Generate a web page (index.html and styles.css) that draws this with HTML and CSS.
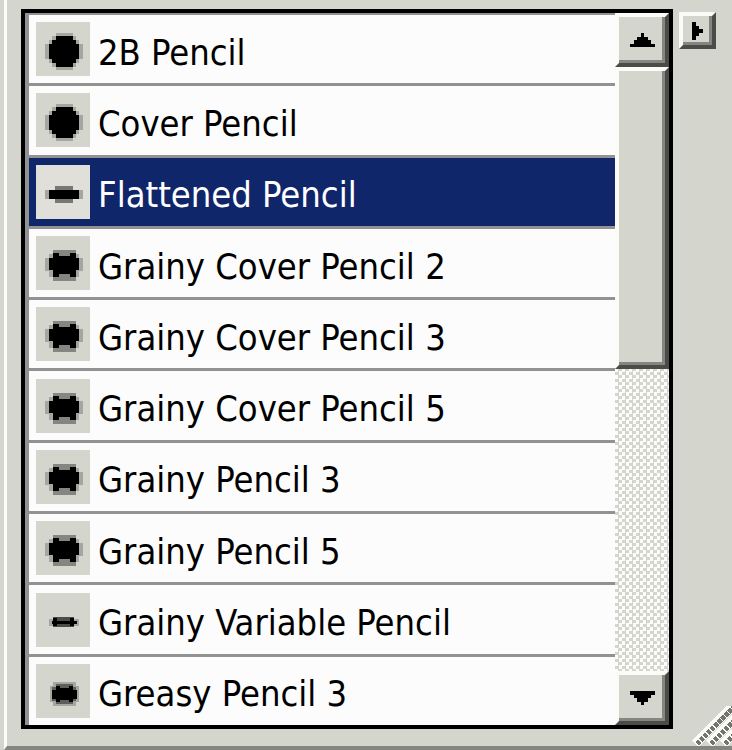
FILE: index.html
```
<!DOCTYPE html>
<html lang="en">
<head>
  <meta charset="UTF-8">
  <title>Pencil Variants</title>
  <link rel="stylesheet" href="styles.css">
</head>
<body>

  <svg class="sprites" aria-hidden="true">
    <symbol id="brush-round" viewBox="0 0 54 54">
      <path fill="#a5a6a0" d="M20 11h17v3h3v4h3v4h4v15h-4v4h-3v4h-3v3H20v-3h-4v-4h-3v-4H9V22h4v-4h3v-4h4z"/>
      <path d="M20 14h17v4h3v4h3v15h-3v4h-3v4H20v-4h-4v-4h-3V22h3v-4h4z"/>
    </symbol>
    <symbol id="brush-flat" viewBox="0 0 54 54">
      <path fill="#a5a6a0" d="M9 25h38v9H9z"/>
      <path fill="#777873" d="M19 21h18v4h3v9h-3v4H19v-4h-3v-9h3z"/>
      <path d="M13 25h30v9H13z"/>
    </symbol>
    <symbol id="brush-grainy" viewBox="0 0 54 54">
      <path fill="#a5a6a0" d="M13 18h30v4h4v13h-4v6H13v-6H9V22h4z"/>
      <path fill="#858681" d="M17 14h23v31H17z"/>
      <path d="M17 17h6v3h11v-3h6v5h3v12h-3v7h-6v-3H23v3h-6v-7h-4V22h4z"/>
    </symbol>
    <symbol id="brush-thin" viewBox="0 0 54 54">
      <path fill="#a5a6a0" d="M13 26h30v7H13z"/>
      <path fill="#4b4b47" d="M17 24h21v10H17z"/>
      <path d="M16 28h25v3H16zM17 25h4v8h-4zM34 25h4v8h-4z"/>
    </symbol>
    <symbol id="brush-small" viewBox="0 0 54 54">
      <path fill="#a5a6a0" d="M17 18h23v4h3v16h-3v4H17v-4h-3V22h3z"/>
      <path fill="#5e5f5b" d="M20 20h17v3h3v14h-3v3H20v-3h-4V23h4z"/>
      <path d="M20 22h4v2h9v-2h4v4h4v9h-4v3h-4v-2h-9v2h-4v-3h-4v-9h4z"/>
    </symbol>
  </svg>

  <div class="palette">
    <div class="list-box">
      <ul class="variants">
        <li><button class="variant"><svg class="brush"><use href="#brush-round"/></svg><span>2B Pencil</span></button></li>
        <li><button class="variant"><svg class="brush"><use href="#brush-round"/></svg><span>Cover Pencil</span></button></li>
        <li><button class="variant selected"><svg class="brush"><use href="#brush-flat"/></svg><span>Flattened Pencil</span></button></li>
        <li><button class="variant"><svg class="brush"><use href="#brush-grainy"/></svg><span>Grainy Cover Pencil 2</span></button></li>
        <li><button class="variant"><svg class="brush"><use href="#brush-grainy"/></svg><span>Grainy Cover Pencil 3</span></button></li>
        <li><button class="variant"><svg class="brush"><use href="#brush-grainy"/></svg><span>Grainy Cover Pencil 5</span></button></li>
        <li><button class="variant"><svg class="brush"><use href="#brush-grainy"/></svg><span>Grainy Pencil 3</span></button></li>
        <li><button class="variant"><svg class="brush"><use href="#brush-grainy"/></svg><span>Grainy Pencil 5</span></button></li>
        <li><button class="variant"><svg class="brush"><use href="#brush-thin"/></svg><span>Grainy Variable Pencil</span></button></li>
        <li><button class="variant"><svg class="brush"><use href="#brush-small"/></svg><span>Greasy Pencil 3</span></button></li>
      </ul>
      <div class="scrollbar">
        <button class="scroll-button" aria-label="Scroll up">
          <svg class="arrow" viewBox="0 0 7 4"><path d="M3 0h1v1h1v1h1v1h1v1H0V3h1V2h1V1h1z"/></svg>
        </button>
        <div class="track"><div class="thumb"></div></div>
        <button class="scroll-button" aria-label="Scroll down">
          <svg class="arrow" viewBox="0 0 7 4"><path d="M0 0h7v1H6v1H5v1H4v1H3V3H2V2H1V1H0z"/></svg>
        </button>
      </div>
    </div>
    <button class="menu-button" aria-label="Palette menu">
      <svg class="menu-arrow" viewBox="0 0 3 5"><path d="M0 0h1v1h1v1h1v1H2v1H1v1H0z"/></svg>
    </button>
    <svg class="grip" viewBox="0 0 40 40" aria-hidden="true">
      <path stroke="#fbfbf8" stroke-width="9" d="M3 38L43 -2M17 38L43 12M31 38L43 26"/>
      <path stroke="#74756f" stroke-width="5" stroke-dasharray="4 1" d="M5 38L45 -2M19 38L45 12M33 38L45 26"/>
    </svg>
  </div>

</body>
</html>
```
FILE: styles.css
```
* {
  box-sizing: border-box;
}

body {
  margin: 0;
  background: #d4d5cd;
  font-family: "DejaVu Sans Condensed", "DejaVu Sans", sans-serif;
  font-size: 36px;
  font-stretch: condensed;
}

button {
  margin: 0;
  padding: 0;
  border: none;
  border-radius: 0;
  font: inherit;
  color: #000;
}

svg {
  display: block;
  shape-rendering: crispEdges;
}

.sprites {
  display: none;
}

.palette {
  position: relative;
  display: flex;
  align-items: flex-start;
  gap: 6px;
  min-height: 100vh;
  margin-left: 4px;
  padding: 9px 16px 17px 14px;
  border-left: 3px solid #fbfbf8;
  border-bottom: 4px solid #858681;
}

.list-box {
  display: flex;
  flex: 1;
  align-self: stretch;
  border: 4px solid #000;
}

.variants {
  display: flex;
  flex: 1;
  flex-direction: column;
  margin: 0;
  padding: 0;
  list-style: none;
  border-top: 2px solid #929292;
  border-left: 4px solid #929292;
}

.variants li {
  box-sizing: content-box;
  flex: 1 1 68px;
  display: flex;
  border-bottom: 3px solid #929292;
}

.variants li:last-child {
  border-bottom: none;
}

.variant {
  display: flex;
  flex: 1;
  align-items: center;
  gap: 8px;
  padding: 0 7px;
  background: #fcfcfc;
  text-align: left;
  white-space: nowrap;
}

.variant.selected {
  background: #10266b;
  color: #fff;
}

.variant span {
  padding-top: 6px;
}

.brush {
  width: 54px;
  height: 54px;
  background: #d4d5cd;
}

.selected .brush {
  background: #e0dfda;
}

.scrollbar {
  display: flex;
  flex-direction: column;
  width: 54px;
}

.scroll-button,
.thumb,
.menu-button {
  background: #d4d5cd;
  border: 4px solid;
  border-color: #fbfbf8 #4b4b47 #4b4b47 #fbfbf8;
  box-shadow: inset -3px -3px #858681;
}

.scroll-button {
  display: flex;
  align-items: center;
  justify-content: center;
  height: 54px;
}

.arrow {
  width: 25px;
  height: 14px;
}

.track {
  flex: 1;
  background: repeating-conic-gradient(#d4d5cd 0% 25%, #fcfcfa 0% 50%) 0 0 / 7px 7px;
}

.thumb {
  height: 50%;
}

.menu-button {
  display: flex;
  align-items: center;
  justify-content: center;
  width: 37px;
  height: 37px;
  margin-top: 3px;
}

.menu-arrow {
  width: 11px;
  height: 18px;
}

/* Resize grip lies over the window corner */
.grip {
  position: absolute;
  right: 0;
  bottom: 0;
  width: 40px;
  height: 40px;
}
```
